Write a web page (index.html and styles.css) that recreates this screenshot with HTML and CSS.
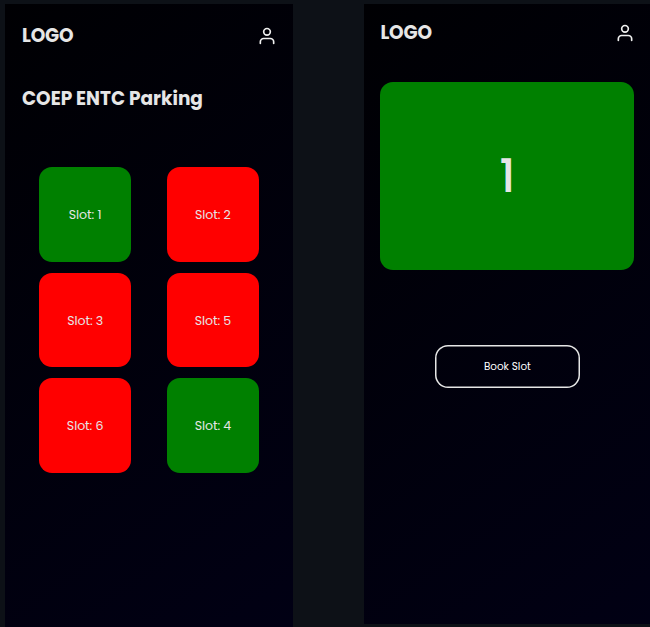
FILE: index.html
```html
<!DOCTYPE html>
<html lang="en">
<head>
<meta charset="utf-8">
<title>COEP ENTC Parking</title>
<link rel="stylesheet" href="styles.css">
</head>
<body>
<main class="board">
  <section class="phone phone-list">
    <header class="bar">
      <div class="logo"><span>LOGO</span></div>
      <svg class="user" viewBox="0 0 24 24"><circle cx="12" cy="7" r="4"/><path d="M20 21v-2a4 4 0 0 0-4-4H8a4 4 0 0 0-4 4v2"/></svg>
    </header>
    <h1 class="title"><span>COEP ENTC Parking</span></h1>
    <div class="slots">
      <div class="slot free">Slot: 1</div>
      <div class="slot">Slot: 2</div>
      <div class="slot">Slot: 3</div>
      <div class="slot">Slot: 5</div>
      <div class="slot">Slot: 6</div>
      <div class="slot free">Slot: 4</div>
    </div>
  </section>
  <section class="phone phone-detail">
    <header class="bar">
      <div class="logo"><span>LOGO</span></div>
      <svg class="user" viewBox="0 0 24 24"><circle cx="12" cy="7" r="4"/><path d="M20 21v-2a4 4 0 0 0-4-4H8a4 4 0 0 0-4 4v2"/></svg>
    </header>
    <div class="selected">1</div>
    <button class="book">Book Slot</button>
  </section>
</main>
</body>
</html>
```
FILE: styles.css
```css
* { box-sizing: border-box; }
body {
  margin: 0;
  background: #0d1117;
  color: #e6e6e6;
  font-family: Poppins, Inter, sans-serif;
}
.board {
  display: flex;
  gap: 71px;
  height: 627px;
  padding: 4px 0 0 5px;
  overflow: hidden;
}
.phone {
  flex: none;
  background: linear-gradient(145deg, #000003, #010014);
}
.phone-list { width: 288px; height: 623px; padding: 16px 17px; }
.phone-detail { width: 286px; height: 620px; padding: 14px 15.6px 0 16.4px; }
.bar {
  display: flex;
  align-items: center;
  justify-content: space-between;
  height: 31px;
}
.logo, .title {
  margin: 0;
  font-size: 18.5px;
  font-weight: 700;
  line-height: 30px;
  white-space: nowrap;
}
.logo { letter-spacing: -0.15px; }
.phone-detail .bar { height: 30px; }
.title { margin-top: 33px; }
.user {
  width: 20px;
  height: 20px;
  margin-right: -1px;
  fill: none;
  stroke: #f0f0f0;
  stroke-width: 2;
  stroke-linecap: round;
  stroke-linejoin: round;
}
.phone-detail .user { margin-right: -0.6px; }
.slots {
  display: grid;
  grid-template-columns: 92.6px 92.6px;
  grid-auto-rows: 94.5px;
  gap: 11px 35.2px;
  margin: 53.4px 0 0 16.8px;
}
.slot {
  display: flex;
  align-items: center;
  justify-content: center;
  border-radius: 13px;
  background: #ff0000;
  font-size: 12.6px;
  letter-spacing: -0.1px;
  padding-top: 1.5px;
}
.free { background: #008000; }
.selected {
  display: flex;
  align-items: center;
  justify-content: center;
  height: 188px;
  margin-top: 34px;
  padding-top: 1px;
  border-radius: 13px;
  background: #008000;
  font-size: 46px;
  font-weight: 500;
}
.book {
  display: block;
  width: 145px;
  height: 43px;
  margin: 75px auto 0;
  padding: 2px 0 0;
  border: 0;
  box-shadow: inset 0 0 0 1.5px #e6e6e6;
  border-radius: 13px;
  background: transparent;
  color: #fff;
  font: 400 10.4px/1 Poppins, Inter, sans-serif;
}
```
